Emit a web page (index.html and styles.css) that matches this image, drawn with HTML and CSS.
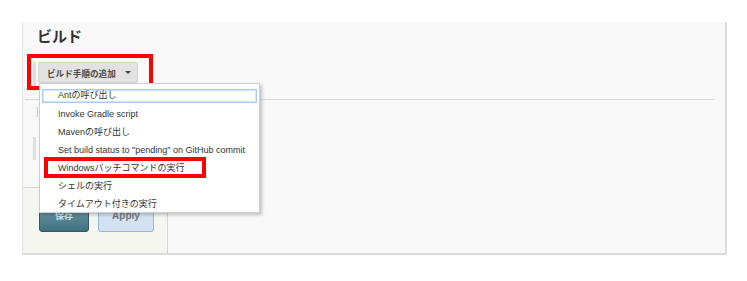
FILE: index.html
```html
<!DOCTYPE html>
<html lang="ja">
<head>
<meta charset="utf-8">
<link rel="stylesheet" href="styles.css">
</head>
<body>
<div class="panel">
  <h2 class="title">ビルド</h2>
  <div class="toolbar">
    <span class="grip"></span>
    <button class="add-btn">ビルド手順の追加 <span class="caret"></span></button>
  </div>
  <div class="rule"></div>
  <div class="stubs">
    <span class="stub-orange"></span>
    <span class="stub-grey"></span>
  </div>
  <div class="bottom-bar">
    <button class="btn save">保存</button>
    <button class="btn apply">Apply</button>
  </div>

  <div class="highlight hl-add"></div>

  <ul class="menu">
    <li class="item focused"><span>Antの呼び出し</span></li>
    <li class="item">Invoke Gradle script</li>
    <li class="item">Mavenの呼び出し</li>
    <li class="item">Set build status to "pending" on GitHub commit</li>
    <li class="item">Windowsバッチコマンドの実行</li>
    <li class="item">シェルの実行</li>
    <li class="item">タイムアウト付きの実行</li>
  </ul>

  <div class="highlight hl-win"></div>
</div>
</body>
</html>
```

FILE: styles.css
```css
html, body {
  margin: 0;
  padding: 0;
  background: #ffffff;
}
body {
  font-family: "Liberation Sans", "Noto Sans CJK JP", sans-serif;
  color: #333;
}
.panel {
  position: relative;
  box-sizing: border-box;
  margin: 22px 0 0 22px;
  width: 705px;
  height: 233px;
  background: #f8f8f8;
  border-left: 1px solid #e2e2e2;
  border-right: 2px solid #dcdcdc;
  border-bottom: 2px solid #dcdcdc;
  display: flex;
  flex-direction: column;
}
.title {
  margin: 0;
  padding: 2px 0 0 14px;
  height: 33px;
  box-sizing: border-box;
  font-family: "Noto Sans CJK JP", sans-serif;
  font-weight: bold;
  font-size: 15px;
  line-height: 24px;
  color: #333;
}
.toolbar {
  display: flex;
  align-items: flex-start;
  height: 36px;
  padding-top: 7px;
  box-sizing: border-box;
}
.grip {
  display: block;
  width: 3px;
  height: 29px;
  margin-left: 10px;
  margin-right: 2px;
  background: #dedede;
}
.add-btn {
  display: flex;
  align-items: center;
  box-sizing: border-box;
  width: 100px;
  height: 21px;
  padding: 0 0 0 8px;
  border: 1px solid #d4d4d4;
  border-radius: 2px;
  background: #e2e2e2;
  font-family: "Noto Sans CJK JP", sans-serif;
  font-weight: bold;
  font-size: 8.6px;
  color: #4a4a4a;
  gap: 9px;
}
.caret {
  width: 0;
  height: 0;
  border-left: 3px solid transparent;
  border-right: 3px solid transparent;
  border-top: 3px solid #444;
}
.rule {
  height: 1px;
  background: #dcdcdc;
  margin: 8px 10px 0 2px;
}
.stubs {
  position: relative;
  height: 60px;
  padding-left: 10px;
  display: flex;
  flex-direction: column;
}
.stub-orange {
  display: block;
  width: 1px;
  height: 11px;
  margin: 7px 0 0 4px;
  background: #e6c48c;
}
.stub-grey {
  display: block;
  width: 3px;
  height: 25px;
  margin: 20px 0 0 0;
  background: #e0e0e0;
}
.bottom-bar {
  margin-top: auto;
  box-sizing: border-box;
  width: 145px;
  height: 66px;
  background: #f4f6ef;
  border-top: 1px solid #cfdcc8;
  border-right: 1px solid #cfdcc8;
  display: flex;
  gap: 9px;
  padding: 17px 0 0 16px;
}
.btn {
  box-sizing: border-box;
  height: 27px;
  border-radius: 3px;
  font-family: "Liberation Sans", "Noto Sans CJK JP", sans-serif;
  font-weight: bold;
  font-size: 10px;
  padding: 0 0 6px 0;
}
.save {
  width: 50px;
  background: linear-gradient(#6a98a8, #41707f);
  border: 1px solid #335a68;
  color: #cfe0e6;
  font-family: "Noto Sans CJK JP", sans-serif;
  font-size: 9px;
}
.apply {
  width: 56px;
  background: #d2e2f2;
  border: 1px solid #97b8db;
  color: #777;
}
.highlight {
  position: absolute;
  box-sizing: border-box;
  border: 4px solid #ff0000;
}
.hl-add {
  left: 4px;
  top: 32px;
  width: 126px;
  height: 36px;
}
.hl-win {
  left: 21px;
  top: 135px;
  width: 162px;
  height: 21px;
}
.menu {
  position: absolute;
  left: 16px;
  top: 61px;
  width: 221px;
  height: 130px;
  box-sizing: border-box;
  margin: 0;
  padding: 3px 1px 0 1px;
  list-style: none;
  background: #fff;
  border: 1px solid #cfcfcf;
  box-shadow: 2px 2px 3px rgba(0, 0, 0, 0.22);
}
.item {
  height: 18px;
  line-height: 18px;
  padding-left: 17px;
  font-size: 9px;
  color: #333;
  white-space: nowrap;
}
.item.focused {
  display: flex;
  align-items: center;
  padding: 2px 1px;
  box-sizing: border-box;
}
.item.focused span {
  display: block;
  flex: 1;
  height: 14px;
  box-sizing: border-box;
  border: 1px solid #a9c9f7;
  box-shadow: inset 0 0 0 1px #d6e6fc;
  padding-left: 15px;
  line-height: 10px;
  overflow: hidden;
}
```
